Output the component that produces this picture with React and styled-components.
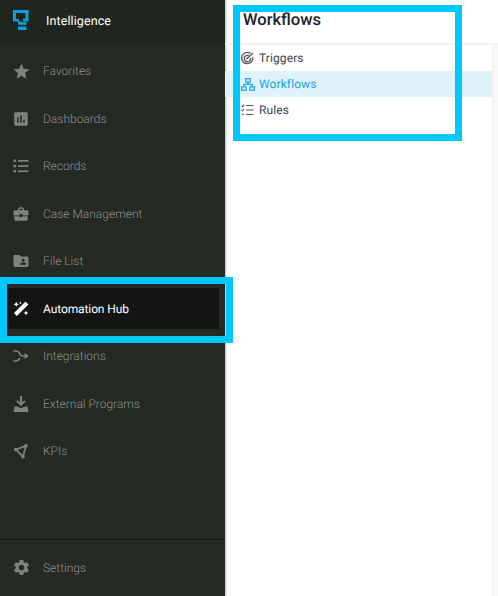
import React from 'react';
import styled, { createGlobalStyle } from 'styled-components';
import {
  MdStar,
  MdAssessment,
  MdBusinessCenter,
  MdFolderShared,
  MdSettings,
} from 'react-icons/md';

const GlobalStyle = createGlobalStyle`
  html, body {
    margin: 0;
    padding: 0;
    background: #ffffff;
  }
  body {
    font-family: Roboto, "Liberation Sans", sans-serif;
    text-rendering: geometricPrecision;
  }
`;

const Page = styled.div`
  position: relative;
  display: flex;
  width: 498px;
  height: 596px;
  overflow: hidden;
`;

const Sidebar = styled.aside`
  display: flex;
  flex-direction: column;
  flex: 0 0 225px;
  background: #252a24;
  box-shadow: 1px 0 2px rgba(0, 0, 0, 0.3);
`;

const Brand = styled.div`
  display: flex;
  align-items: center;
  gap: 17px;
  height: 44px;
  box-sizing: border-box;
  padding: 0 0 2px 13px;
  background: #21251f;
  color: #ffffff;
  font-size: 12.5px;
  letter-spacing: 0.1px;
`;

const Nav = styled.nav`
  display: flex;
  flex-direction: column;
  flex: 1;
  padding-top: 3.5px;
`;

const NavItem = styled.div`
  display: flex;
  align-items: center;
  gap: 14px;
  height: 47.5px;
  box-sizing: border-box;
  padding-left: 13px;
  color: #8e908d;
  font-size: 12px;
  font-weight: 300;

  ${(p) =>
    p.$active &&
    `
    height: 41px;
    margin: 3.25px 6px 3.25px 7px;
    padding-left: 6px;
    background: #141414;
    color: #ffffff;
    font-weight: 400;
    letter-spacing: -0.1px;
  `}
`;

const IconSlot = styled.span`
  display: flex;
  align-items: center;
  justify-content: center;
  flex: 0 0 16px;
  width: 16px;
  height: 16px;
  color: #808280;

  ${(p) => p.$active && 'color: #ffffff;'}

  svg {
    flex-shrink: 0;
  }
`;

const SidebarFooter = styled.div`
  display: flex;
  align-items: center;
  gap: 14px;
  height: 55px;
  margin-bottom: 1px;
  padding-left: 13px;
  border-top: 1px solid #191c18;
  color: #8e908d;
  font-size: 12px;
  font-weight: 300;
`;

const Main = styled.main`
  display: flex;
  flex-direction: column;
  flex: 1;
  min-width: 0;
`;

const MainHeader = styled.header`
  display: flex;
  flex: 0 0 45px;
  box-sizing: border-box;
  padding: 10px 0 0 18px;
  border-bottom: 2px solid #f2f3f7;
`;

const Title = styled.h1`
  margin: 0;
  color: #1e2233;
  font-size: 16.5px;
  font-weight: 500;
  line-height: 21px;
`;

const Body = styled.div`
  display: flex;
  flex: 1;
`;

const SubNav = styled.div`
  display: flex;
  flex-direction: column;
  flex: 1;
`;

const SubItem = styled.div`
  display: flex;
  align-items: center;
  gap: 5px;
  height: 26px;
  padding-left: 16px;
  background: ${(p) => (p.$active ? '#dff2fa' : 'transparent')};
  color: ${(p) => (p.$active ? '#16a5e0' : '#41434f')};
  font-size: 12px;
  letter-spacing: 0.1px;
`;

const SubIcon = styled.span`
  display: flex;
  align-items: center;
  justify-content: center;
  flex: 0 0 13px;
  width: 13px;
  height: 13px;

  svg {
    flex-shrink: 0;
  }
`;

const Gutter = styled.div`
  flex: 0 0 6px;
  box-sizing: border-box;
  border-left: 1px solid #eeeef0;
  background: #f8f8f9;
`;

const Callout = styled.div`
  position: absolute;
  box-sizing: border-box;
  left: ${(p) => p.$left}px;
  top: ${(p) => p.$top}px;
  width: ${(p) => p.$width}px;
  height: ${(p) => p.$height}px;
  border: 7px solid #00c8ff;
  pointer-events: none;
`;

const LogoMark = styled.svg`
  flex-shrink: 0;
  margin-bottom: 2px;
`;

const Logo = () => (
  <LogoMark width="16" height="20" viewBox="0 0 16 20">
    <path fill="#0e9ddc" d="M0 0h15.5v11.5h-5.5v-3h2.5V3H3v6h3v2.5h3v2.5H5V11.5H0z" />
    <rect x="5" y="16.5" width="8.5" height="3.5" fill="#0e9ddc" />
    <rect x="5" y="12.2" width="8.5" height="2.6" fill="#0e9ddc" />
  </LogoMark>
);

const RecordsIcon = () => (
  <svg width="16" height="14" viewBox="0 0 16 14" fill="currentColor">
    <rect x="0.5" y="0.5" width="2.6" height="2.6" rx="0.6" />
    <rect x="0.5" y="5.7" width="2.6" height="2.6" rx="0.6" />
    <rect x="0.5" y="10.9" width="2.6" height="2.6" rx="0.6" />
    <rect x="5" y="1" width="10.5" height="1.7" />
    <rect x="5" y="6.2" width="10.5" height="1.7" />
    <rect x="5" y="11.4" width="10.5" height="1.7" />
  </svg>
);

const WandIcon = () => (
  <svg width="16" height="16" viewBox="0 0 16 16" fill="currentColor">
    <path d="M12.6 0.6l2.8 2.8L3.9 15 1 12.1z" />
    <path d="M3.2 0.5l.8 2 2 .8-2 .8-.8 2-.8-2-2-.8 2-.8z" />
    <path d="M13 9.6l.7 1.7 1.8.7-1.8.7-.7 1.8-.7-1.8-1.8-.7 1.8-.7z" />
    <path d="M7.4 0.6l.4 1 1 .4-1 .4-.4 1-.4-1-1-.4 1-.4z" />
  </svg>
);

const IntegrationsIcon = () => (
  <svg width="16" height="12" viewBox="0 0 16 12" fill="none" stroke="currentColor" strokeWidth="1.7">
    <path d="M0.5 1h3c2 0 2.6 1.6 3.4 3 .6 1 1.2 2 2.6 2h2.5" />
    <path d="M0.5 11h3c2 0 2.6-1.6 3.4-3" />
    <path fill="currentColor" stroke="none" d="M11.5 3l4.5 3-4.5 3z" />
  </svg>
);

const DownloadIcon = () => (
  <svg width="16" height="16" viewBox="0 0 16 16" fill="currentColor">
    <path d="M7 0h2v6.5l2.4-2.3 1.3 1.3L8 10 3.3 5.5l1.3-1.3L7 6.5z" />
    <path d="M1.5 10.5h2.6L8 12.2l3.9-1.7h2.6l1 5.5H.5z" />
  </svg>
);

const KpiIcon = () => (
  <svg width="14" height="15" viewBox="0 0 14 15" fill="none" stroke="currentColor" strokeWidth="1.8">
    <path d="M1.8 5.5L12 1.8l-3 10.8z" />
    <circle cx="1.8" cy="5.5" r="1.8" fill="currentColor" stroke="none" />
    <circle cx="12" cy="1.8" r="1.8" fill="currentColor" stroke="none" />
    <circle cx="9" cy="12.8" r="1.8" fill="currentColor" stroke="none" />
  </svg>
);

const TriggersIcon = () => (
  <svg width="13" height="13" viewBox="0 0 13 13" fill="none" stroke="#5a5c66" strokeWidth="1.4">
    <path d="M9.5 1.4A5.6 5.6 0 1 0 11.8 5" />
    <path d="M7.8 3.6A3.2 3.2 0 1 0 9.6 6" />
    <path d="M6.2 6.6L12 1" />
    <circle cx="6.2" cy="6.5" r="1" fill="#5a5c66" stroke="none" />
  </svg>
);

const WorkflowsIcon = () => (
  <svg width="14" height="13" viewBox="0 0 14 13" fill="none" stroke="#16a5e0" strokeWidth="1.2">
    <rect x="4.8" y="0.6" width="4.4" height="3.4" />
    <rect x="0.6" y="8.8" width="4.4" height="3.4" />
    <rect x="9" y="8.8" width="4.4" height="3.4" />
    <path d="M7 4v2.4M2.8 8.8V6.4h8.4v2.4" />
  </svg>
);

const RulesIcon = () => (
  <svg width="13" height="12" viewBox="0 0 13 12" fill="none" stroke="#5a5c66" strokeWidth="1.1">
    <path d="M0.6 1.6l1 1 1.6-2M0.6 6l1 1 1.6-2" />
    <circle cx="1.6" cy="10.4" r="0.9" fill="#5a5c66" stroke="none" />
    <path d="M5 1.5h7.6M5 6h7.6M5 10.5h7.6" />
  </svg>
);

const navItems = [
  { label: 'Favorites', icon: <MdStar size={19} /> },
  { label: 'Dashboards', icon: <MdAssessment size={18} /> },
  { label: 'Records', icon: <RecordsIcon /> },
  { label: 'Case Management', icon: <MdBusinessCenter size={18} /> },
  { label: 'File List', icon: <MdFolderShared size={18} /> },
  { label: 'Automation Hub', icon: <WandIcon />, active: true },
  { label: 'Integrations', icon: <IntegrationsIcon /> },
  { label: 'External Programs', icon: <DownloadIcon /> },
  { label: 'KPIs', icon: <KpiIcon /> },
];

const subItems = [
  { label: 'Triggers', icon: <TriggersIcon /> },
  { label: 'Workflows', icon: <WorkflowsIcon />, active: true },
  { label: 'Rules', icon: <RulesIcon /> },
];

export default function App() {
  return (
    <Page>
      <GlobalStyle />
      <Sidebar>
        <Brand>
          <Logo />
          Intelligence
        </Brand>
        <Nav>
          {navItems.map((item) => (
            <NavItem key={item.label} $active={item.active}>
              <IconSlot $active={item.active}>{item.icon}</IconSlot>
              {item.label}
            </NavItem>
          ))}
        </Nav>
        <SidebarFooter>
          <IconSlot>
            <MdSettings size={19} />
          </IconSlot>
          Settings
        </SidebarFooter>
      </Sidebar>
      <Main>
        <MainHeader>
          <Title>Workflows</Title>
        </MainHeader>
        <Body>
          <SubNav>
            {subItems.map((item) => (
              <SubItem key={item.label} $active={item.active}>
                <SubIcon>{item.icon}</SubIcon>
                {item.label}
              </SubItem>
            ))}
          </SubNav>
          <Gutter />
        </Body>
      </Main>
      <Callout $left={0} $top={277} $width={233} $height={66} />
      <Callout $left={233} $top={5} $width={229} $height={136} />
    </Page>
  );
}
